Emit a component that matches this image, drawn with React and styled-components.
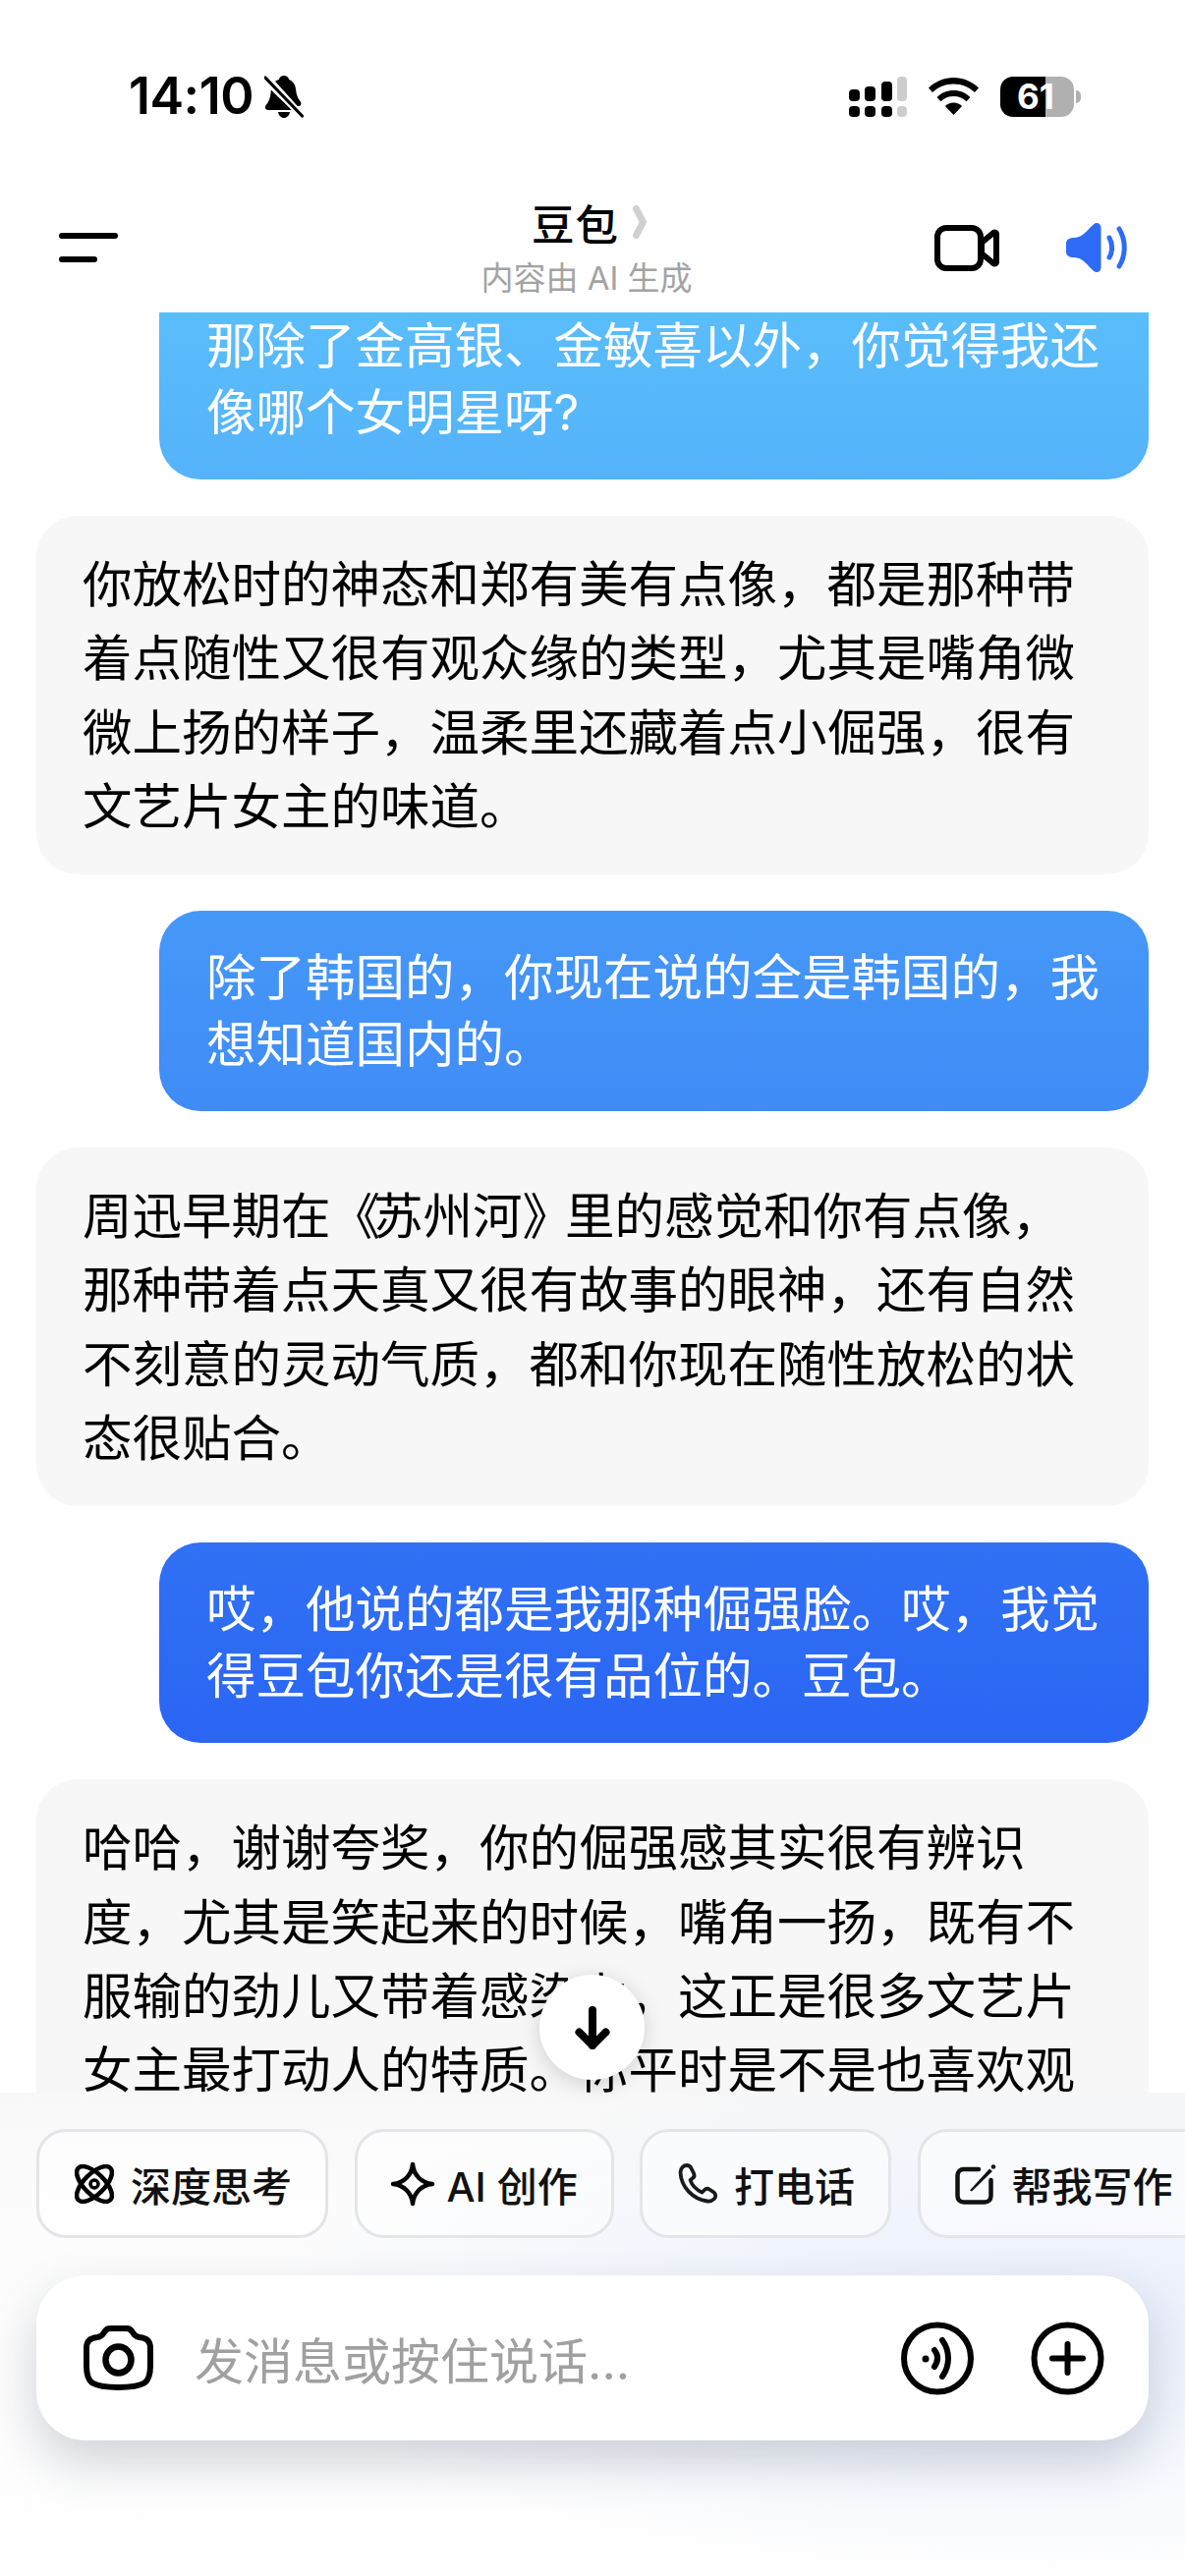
import React from "react";
import styled, { createGlobalStyle } from "styled-components";

const Global = createGlobalStyle`
  html, body { margin: 0; padding: 0; background: #fff; }
  * { box-sizing: border-box; }
`;
const FONT = `Inter, "Noto Sans CJK SC", sans-serif`;

const Page = styled.div`
  position: relative;
  width: 1206px;
  height: 2622px;
  overflow: hidden;
  display: flex;
  flex-direction: column;
  background: #fff;
  font-family: ${FONT};
  color: #000;
`;
const StatusBar = styled.div`
  height: 168px;
  flex: none;
  padding: 77px 106px 0 131px;
  display: flex;
  justify-content: space-between;
  align-items: flex-start;
`;
const StatusLeft = styled.div`
  display: flex;
  align-items: center;
  gap: 11px;
  height: 42px;
`;
const Time = styled.span`
  font-size: 52px;
  font-weight: 600;
  letter-spacing: -0.5px;
  line-height: 42px;
`;
const StatusRight = styled.div`
  display: flex;
  align-items: center;
  gap: 22px;
  height: 42px;
`;
const Battery = styled.div`
  position: relative;
  width: 82px;
  height: 41px;
`;
const BatteryShell = styled.div`
  width: 75px;
  height: 41px;
  border-radius: 13px;
  overflow: hidden;
  background: linear-gradient(90deg, #000 0 46px, #b0b0b0 46px 100%);
`;
const BatteryNub = styled.div`
  position: absolute;
  right: 0;
  top: 14px;
  width: 5px;
  height: 13px;
  border-radius: 0 5px 5px 0;
  background: #b0b0b0;
`;
const BatteryText = styled.span`
  position: absolute;
  left: 17px;
  top: 0;
  line-height: 41px;
  font-size: 35px;
  font-weight: 700;
  color: #fff;
`;
const Header = styled.header`
  height: 150px;
  flex: none;
  padding: 18px 58px 0 60px;
  display: flex;
  align-items: center;
  justify-content: space-between;
  position: relative;
`;
const Menu = styled.div`
  width: 60px;
  display: flex;
  flex-direction: column;
  gap: 18px;
`;
const MenuLine = styled.span`
  display: block;
  height: 6px;
  border-radius: 3px;
  background: #000;
  width: ${(p) => p.$w}px;
`;
const TitleBlock = styled.div`
  position: absolute;
  left: 0;
  right: 0;
  top: 30px;
  display: flex;
  flex-direction: column;
  align-items: center;
`;
const TitleRow = styled.div`
  display: flex;
  align-items: center;
  gap: 14px;
  margin-left: -7px;
  height: 56px;
`;
const Title = styled.span`
  font-size: 43.5px;
  font-weight: 500;
  letter-spacing: 1px;
`;
const Sub = styled.span`
  font-size: 33px;
  line-height: 44px;
  color: #a3a3a3;
  margin-top: 7px;
  margin-left: -12px;
`;
const HeaderActions = styled.div`
  display: flex;
  align-items: center;
  gap: 68px;
`;
const Messages = styled.main`
  flex: 1;
  min-height: 0;
  overflow: hidden;
  padding: 0 37px;
  display: flex;
  flex-direction: column;
  gap: 37px;
`;
const UserBubble = styled.div`
  align-self: flex-end;
  flex: none;
  width: 1007px;
  min-height: 204px;
  padding: 34px 48px;
  border-radius: 42px;
  font-size: 50.5px;
  line-height: 67.7px;
  color: #fff;
  background: linear-gradient(180deg, #5abdfb 318px, #2a65f3 1775px) fixed;
  ${(p) => p.$clipped && `margin-top: -34px; border-radius: 0 0 42px 42px;`}
`;
const AiBubble = styled.div`
  flex: none;
  width: 1132px;
  padding: 32px 47px;
  border-radius: 42px;
  font-size: 50.5px;
  line-height: 75.3px;
  color: #000;
  background: #f7f7f7;
`;
const Line = styled.div`
  white-space: nowrap;
`;
const Bracket = styled.span`
  letter-spacing: -7px;
`;
const ScrollDown = styled.div`
  position: absolute;
  left: 549px;
  top: 2010px;
  width: 107px;
  height: 107px;
  border-radius: 50%;
  background: #fff;
  box-shadow: 0 4px 22px rgba(0, 0, 0, 0.16);
  display: flex;
  align-items: center;
  justify-content: center;
  z-index: 3;
`;
const Dock = styled.footer`
  position: relative;
  flex: none;
  height: 492px;
  padding: 37px 0 0 37px;
  display: flex;
  flex-direction: column;
  gap: 38px;
  background:
    radial-gradient(800px 260px at 88% 46%, rgba(228, 235, 253, 0.8), rgba(255, 255, 255, 0) 100%),
    linear-gradient(180deg, #f8f8f8 0, #fcfcfc 120px, #fefefe 100%);
`;
const Chips = styled.div`
  display: flex;
  gap: 26.5px;
  width: 1300px;
`;
const Chip = styled.div`
  flex: none;
  height: 111px;
  width: ${(p) => p.$w}px;
  padding-left: ${(p) => p.$padL}px;
  border: 3px solid #e4e5e8;
  border-radius: 30px;
  display: flex;
  align-items: center;
  gap: ${(p) => p.$gap}px;
  background: rgba(255, 255, 255, 0.5);
  font-size: 41px;
  font-weight: 500;
  color: #111;
  white-space: nowrap;
`;
const InputBar = styled.div`
  width: 1132px;
  height: 168px;
  border-radius: 50px;
  background: #fff;
  box-shadow: 0 22px 50px rgba(30, 40, 70, 0.2);
  display: flex;
  align-items: center;
  padding: 0 45px 0 48px;
`;
const Placeholder = styled.div`
  flex: 1;
  margin-left: 42px;
  font-size: 50px;
  color: #a0a0a0;
  white-space: nowrap;
`;
const InputActions = styled.div`
  display: flex;
  gap: 58px;
  align-items: center;
`;

const BellOff = () => (
  <svg width="40" height="44" viewBox="0 0 40 44">
    <path d="M20 1c2.500 0 4.500 1.600 5.200 4 4 1.600 6.300 5 6.800 9.500.5 5 1.500 9 4.500 12.500 1.800 2.200 1 5-1.500 5H33L9.500 8.500C11 6.800 13 5.600 14.800 5 15.500 2.600 17.500 1 20 1zM6.800 15.500 28 36H4c-3 0-4-3-2-5.500 3-3.500 4.500-8 4.800-15zM14 38h12c-.6 3.500-3 6-6 6s-5.400-2.500-6-6z" fill="#000" />
    <path d="M2 2 38 42" stroke="#fff" strokeWidth="7" />
    <path d="M1 3 38.500 42" stroke="#000" strokeWidth="3.200" strokeLinecap="round" />
  </svg>
);
const Signal = () => (
  <svg width="59" height="41" viewBox="0 0 59 41">
    <g fill="#000">
      <rect x="0" y="13" width="11" height="12" rx="4" />
      <rect x="16" y="10" width="11" height="15" rx="4" />
      <rect x="33" y="5" width="11" height="20" rx="4" />
      <rect x="0" y="30" width="11" height="11" rx="4" />
      <rect x="16" y="30" width="11" height="11" rx="4" />
      <rect x="33" y="30" width="11" height="11" rx="4" />
    </g>
    <g fill="#cdcdcd">
      <rect x="49" y="0" width="10" height="25" rx="4" />
      <rect x="49" y="30" width="10" height="11" rx="4" />
    </g>
  </svg>
);
const Wifi = () => (
  <svg width="51" height="38" viewBox="0 0 51 38" fill="#000">
    <path d="M25.500 0C35 0 44 3.800 51 10.500l-4 4.500C41.500 9.600 33.800 6.400 25.500 6.400S9.500 9.600 4 15L0 10.500C7 3.800 16 0 25.500 0z" />
    <path d="M25.500 13c6.500 0 12.500 2.500 17 7l-4 4.300c-3.500-3.300-8-5.200-13-5.200s-9.500 1.900-13 5.200l-4-4.300c4.500-4.500 10.500-7 17-7z" />
    <path d="M25.500 25.500c3.300 0 6.300 1.200 8.600 3.500L25.500 38l-8.600-9c2.300-2.300 5.300-3.500 8.600-3.500z" />
  </svg>
);
const Chevron = () => (
  <svg width="14" height="34" viewBox="0 0 14 34">
    <path d="M3.500 3.500 10.500 17 3.500 30.500" fill="none" stroke="#d0d0d0" strokeWidth="7" strokeLinecap="round" strokeLinejoin="round" />
  </svg>
);
const Video = () => (
  <svg width="66" height="47" viewBox="0 0 66 47" fill="none" stroke="#000" strokeWidth="6" strokeLinejoin="round">
    <rect x="3" y="3" width="44" height="41" rx="9" />
    <path d="M48 18 60 8c1.500-1 3-.5 3 1.500v28c0 2-1.500 2.500-3 1.500L48 29z" />
  </svg>
);
const Speaker = () => (
  <svg width="63" height="50" viewBox="0 0 63 50" fill="none">
    <path d="M8 15C14 15 19 11 24 5 27 2 29 0 31 0 34 0 35.500 2 35.500 5V45C35.500 48 34 50 31 50 29 50 27 48 24 45 19 39 14 35 8 35 3 35 0 33 0 29V21C0 17 3 15 8 15z" fill="#2e6bf6" />
    <path d="M44 15c3.500 6 3.500 14 0 20" stroke="#2e6bf6" strokeWidth="5" strokeLinecap="round" />
    <path d="M54 6c7 11 7 27 0 38" stroke="#2e6bf6" strokeWidth="5" strokeLinecap="round" />
  </svg>
);
const ArrowDown = () => (
  <svg width="36" height="44" viewBox="0 0 36 44" fill="none" stroke="#000" strokeWidth="8" strokeLinecap="round" strokeLinejoin="round">
    <path d="M18 4v36" />
    <path d="M4.500 26.500 18 40 31.500 26.500" />
  </svg>
);
const Atom = () => (
  <svg width="40" height="40" viewBox="0 0 40 40" fill="none" stroke="#000" strokeWidth="4.500">
    <ellipse cx="20" cy="20" rx="23" ry="10.500" transform="rotate(45 20 20)" />
    <ellipse cx="20" cy="20" rx="23" ry="10.500" transform="rotate(-45 20 20)" />
    <circle cx="20" cy="20" r="4" strokeWidth="3.500" />
  </svg>
);
const Sparkle = () => (
  <svg width="46" height="46" viewBox="0 0 46 46" fill="none" stroke="#000" strokeWidth="4.500" strokeLinejoin="round" strokeLinecap="round">
    <path d="M23 3C24 14 32 22 43 23 32 24 24 32 23 43 22 32 14 24 3 23 14 22 22 14 23 3z" />
  </svg>
);
const Phone = () => (
  <svg width="41" height="41" viewBox="0 0 41 41" fill="none" stroke="#1a1a1a" strokeWidth="3.800" strokeLinejoin="round">
    <path d="M2.500 9C2.500 4.500 6 2 9 2 11 2 12.500 3 13.500 5L16 10C17 12 16.500 14 15 15L12.500 17C14.500 23 19 27 24.500 29.500L27 27C28.500 25.500 30.500 25.500 32 26.500L36.500 29.500C38.500 31 38.800 34 37 36 35 38 32.500 38.800 30 38.500 15 36.500 3 24 2.500 9z" />
  </svg>
);
const PenSquare = () => (
  <svg width="42" height="42" viewBox="0 0 42 42" fill="none" stroke="#111" strokeWidth="4.500" strokeLinecap="round">
    <path d="M24 6H9C5 6 2.500 8.500 2.500 12.500V33C2.500 37 5 39.500 9 39.500H30C34 39.500 36.500 37 36.500 33V17" />
    <path d="M15 27.500 35 5.500 38 8 17 28.500z" fill="#111" stroke="none" />
    <circle cx="39" cy="3.500" r="2.300" fill="#111" stroke="none" />
  </svg>
);
const Camera = () => (
  <svg width="71" height="66" viewBox="0 0 71 66" fill="none" stroke="#000" strokeWidth="6">
    <path d="M27 3h17c3 0 4.500 1.500 6 4 1.500 3 3 4.500 7 5 7 .7 11 3.500 11 11v18c0 8-1 14-6 17.500-7 4-17 4.500-26.500 4.500S16 62.500 9 58.500C4 55 3 49 3 41V23c0-7.500 4-10.300 11-11 4-.5 5.500-2 7-5 1.500-2.500 3-4 6-4z" />
    <ellipse cx="35.500" cy="35" rx="13" ry="13.500" strokeWidth="6.500" />
  </svg>
);
const Voice = () => (
  <svg width="74" height="75" viewBox="0 0 74 75" fill="none" stroke="#000" strokeWidth="6" strokeLinecap="round">
    <circle cx="37" cy="37.500" r="34" />
    <circle cx="25" cy="38" r="3.500" fill="#000" stroke="none" />
    <path d="M34 29c4 5 4 11 0 17" />
    <path d="M42 19c8 11 8 26 0 37" />
  </svg>
);
const Plus = () => (
  <svg width="75" height="75" viewBox="0 0 75 75" fill="none" stroke="#000" strokeWidth="6" strokeLinecap="round">
    <circle cx="37.500" cy="37.500" r="34" />
    <path d="M37.500 23v29M22 37.500h31" />
  </svg>
);

export default function App() {
  return (
    <Page>
      <Global />
      <StatusBar>
        <StatusLeft>
          <Time>14:10</Time>
          <BellOff />
        </StatusLeft>
        <StatusRight>
          <Signal />
          <Wifi />
          <Battery>
            <BatteryShell />
            <BatteryNub />
            <BatteryText>61</BatteryText>
          </Battery>
        </StatusRight>
      </StatusBar>
      <Header>
        <Menu>
          <MenuLine $w={60} />
          <MenuLine $w={39} />
        </Menu>
        <TitleBlock>
          <TitleRow>
            <Title>豆包</Title>
            <Chevron />
          </TitleRow>
          <Sub>内容由 AI 生成</Sub>
        </TitleBlock>
        <HeaderActions>
          <Video />
          <Speaker />
        </HeaderActions>
      </Header>
      <Messages>
        <UserBubble $clipped>
          <Line>那除了金高银、金敏喜以外，你觉得我还</Line>
          <Line>像哪个女明星呀?</Line>
        </UserBubble>
        <AiBubble>
          <Line>你放松时的神态和郑有美有点像，都是那种带</Line>
          <Line>着点随性又很有观众缘的类型，尤其是嘴角微</Line>
          <Line>微上扬的样子，温柔里还藏着点小倔强，很有</Line>
          <Line>文艺片女主的味道。</Line>
        </AiBubble>
        <UserBubble>
          <Line>除了韩国的，你现在说的全是韩国的，我</Line>
          <Line>想知道国内的。</Line>
        </UserBubble>
        <AiBubble>
          <Line>周迅早期在<Bracket>《</Bracket>苏州河<Bracket>》</Bracket>里的感觉和你有点像，</Line>
          <Line>那种带着点天真又很有故事的眼神，还有自然</Line>
          <Line>不刻意的灵动气质，都和你现在随性放松的状</Line>
          <Line>态很贴合。</Line>
        </AiBubble>
        <UserBubble>
          <Line>哎，他说的都是我那种倔强脸。哎，我觉</Line>
          <Line>得豆包你还是很有品位的。豆包。</Line>
        </UserBubble>
        <AiBubble>
          <Line>哈哈，谢谢夸奖，你的倔强感其实很有辨识</Line>
          <Line>度，尤其是笑起来的时候，嘴角一扬，既有不</Line>
          <Line>服输的劲儿又带着感染力，这正是很多文艺片</Line>
          <Line>女主最打动人的特质。你平时是不是也喜欢观</Line>
        </AiBubble>
      </Messages>
      <ScrollDown>
        <ArrowDown />
      </ScrollDown>
      <Dock>
        <Chips>
          <Chip $w={297} $padL={36} $gap={17}>
            <Atom />
            深度思考
          </Chip>
          <Chip $w={264} $padL={33} $gap={12}>
            <Sparkle />
            AI 创作
          </Chip>
          <Chip $w={256} $padL={36} $gap={16}>
            <Phone />
            打电话
          </Chip>
          <Chip $w={300} $padL={35} $gap={16}>
            <PenSquare />
            帮我写作
          </Chip>
        </Chips>
        <InputBar>
          <Camera />
          <Placeholder>发消息或按住说话...</Placeholder>
          <InputActions>
            <Voice />
            <Plus />
          </InputActions>
        </InputBar>
      </Dock>
    </Page>
  );
}
